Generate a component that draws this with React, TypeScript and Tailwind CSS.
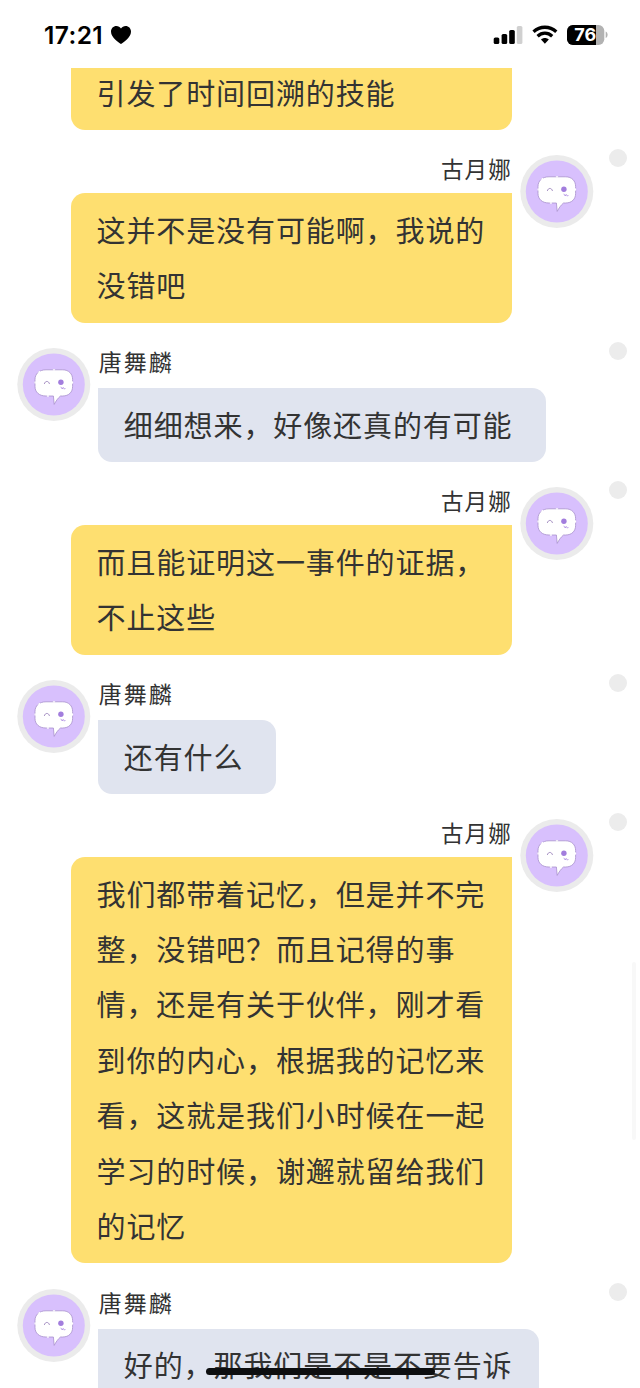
import React from "react";

type Message = {
  side: "left" | "right";
  name: string;
  lines: string[];
  bubble: string;
};

const messages: Message[] = [
  { side: "right", name: "古月娜", lines: ["这并不是没有可能啊，我说的", "没错吧"], bubble: "w-[441.5px] h-[129.5px]" },
  { side: "left", name: "唐舞麟", lines: ["细细想来，好像还真的有可能"], bubble: "w-[448.3px] h-[74px]" },
  { side: "right", name: "古月娜", lines: ["而且能证明这一事件的证据，", "不止这些"], bubble: "w-[441.5px] h-[129.5px]" },
  { side: "left", name: "唐舞麟", lines: ["还有什么"], bubble: "w-[178.3px] h-[74px]" },
  {
    side: "right",
    name: "古月娜",
    lines: [
      "我们都带着记忆，但是并不完",
      "整，没错吧？而且记得的事",
      "情，还是有关于伙伴，刚才看",
      "到你的内心，根据我的记忆来",
      "看，这就是我们小时候在一起",
      "学习的时候，谢邂就留给我们",
      "的记忆",
    ],
    bubble: "w-[441.5px] h-[406.4px]",
  },
  { side: "left", name: "唐舞麟", lines: ["好的，那我们是不是不要告诉"], bubble: "w-[441px] h-[129.5px]" },
];

function Avatar() {
  return (
    <svg viewBox="0 0 74 74" className="h-[74px] w-[74px] shrink-0">
      <circle cx="36.8" cy="36.5" r="36.5" fill="#ebebeb" />
      <circle cx="36.8" cy="36.5" r="31" fill="#d8c0fd" />
      <path
        d="M29 21.8H45.5C52 21.8 55.6 26 55.6 31.5V38.5C55.6 44 52 48 45.5 48H43.5C41 50 39 53 37.2 56.4L36.4 48H29C22 48 18 44 18 38.5V31.5C18 26 22 21.8 29 21.8Z"
        fill="#fff"
        stroke="#a48cc9"
        strokeWidth=".75"
      />
      <path
        d="M21.8 24.2L22.6 23.6M36.4 21.8H37.6M18.1 34V35M55.5 34V35M30.4 48H31.4"
        fill="none"
        stroke="#fff"
        strokeWidth="1.3"
        strokeLinecap="round"
      />
      <path d="M27.4 35.6C28 32.6 31.8 32.6 32.4 35.6" fill="none" stroke="#9277b5" strokeWidth=".8" strokeLinecap="round" />
      <circle cx="43.9" cy="34.2" r="2.7" fill="#a27ddd" />
      <path d="M43.8 38.8L45.2 41L46.2 39.4L47.4 41.2L48.4 40" fill="none" stroke="#a27ddd" strokeWidth=".7" />
    </svg>
  );
}

function MoreDot() {
  return <span className="absolute -top-[6px] right-[13px] h-[18px] w-[18px] rounded-full bg-[#ececec]" />;
}

function Lines({ lines }: { lines: string[] }) {
  return (
    <>
      {lines.map((line) => (
        <p key={line} className="whitespace-nowrap text-[29px] leading-[55.4px] tracking-[0.9px] text-[#333]">
          {line}
        </p>
      ))}
    </>
  );
}

function MessageRow({ message }: { message: Message }) {
  const { side, name, lines, bubble } = message;
  if (side === "right") {
    return (
      <div className="relative mb-[25.5px] flex justify-end gap-[7.5px] pr-[46.5px]">
        <div className="flex flex-col items-end">
          <p className="h-[38px] text-[22.5px] leading-[26px] tracking-[1.2px] text-[#333]">{name}</p>
          <div className={`rounded-[14px] rounded-tr-none bg-[#fedf70] pt-[8.6px] pl-[26px] ${bubble}`}>
            <Lines lines={lines} />
          </div>
        </div>
        <Avatar />
        <MoreDot />
      </div>
    );
  }
  return (
    <div className="relative mb-[25px] flex gap-[7.5px] pl-[16.5px]">
      <Avatar />
      <div>
        <p className="h-[40px] pl-[0.7px] text-[23px] leading-[26px] tracking-[2px] text-[#333]">{name}</p>
        <div className={`rounded-[14px] rounded-tl-none bg-[#e0e4ef] pt-[8.6px] pl-[25.8px] ${bubble}`}>
          <Lines lines={lines} />
        </div>
      </div>
      <MoreDot />
    </div>
  );
}

function StatusBar() {
  return (
    <header className="flex h-[68px] items-start justify-between pt-[24px] pl-[44px] pr-[32px] text-black">
      <div className="-mt-px flex items-center gap-[7.5px] font-['Inter',sans-serif]">
        <span className="text-[24.5px] leading-[24px] font-semibold tracking-[0.4px]">17:21</span>
        <svg viewBox="0 0 20 18" className="h-[18px] w-[20px]">
          <path
            d="M10 18C8.5 17 0 11.6 0 5.8C0 2.4 2.4 0 5.4 0C7.3 0 9 1 10 2.6C11 1 12.7 0 14.6 0C17.6 0 20 2.4 20 5.8C20 11.6 11.5 17 10 18Z"
            fill="#000"
          />
        </svg>
      </div>
      <svg viewBox="0 0 116 24" className="h-[24px] w-[116px]">
        <rect x="1.7" y="13.5" width="5.6" height="6.5" rx="1.6" />
        <rect x="9.6" y="10" width="5.6" height="10" rx="1.6" />
        <rect x="17.2" y="6" width="5.6" height="14" rx="1.6" />
        <rect x="24.8" y="2" width="5.6" height="18" rx="1.6" fill="#d0d0d0" />
        <g fill="none" stroke="#000" strokeWidth="3.3">
          <path d="M41.5 7.8C48.2 1.7 57.6 1.7 64.3 7.8" />
          <path d="M45.6 12.2C49.9 8.2 55.9 8.2 60.2 12.2" />
        </g>
        <path d="M49 15.6C51.3 13.6 54.5 13.6 56.8 15.6L52.9 19.8Z" />
        <clipPath id="battery">
          <rect x="75" y="1" width="37.3" height="20" rx="5.8" />
        </clipPath>
        <g clipPath="url(#battery)">
          <rect x="75" y="1" width="38" height="20" fill="#b2b2b2" />
          <rect x="75" y="1" width="29" height="20" />
        </g>
        <path d="M113.7 7.5C116.2 8.5 116.2 13.1 113.7 14.1Z" fill="#b2b2b2" />
        <text x="93.3" y="17.4" textAnchor="middle" fontFamily="Inter, sans-serif" fontSize="18" fontWeight="700" fill="#fff">
          76
        </text>
      </svg>
    </header>
  );
}

export default function App() {
  return (
    <div className="relative h-[1388px] w-[640px] overflow-hidden bg-white font-['Noto_Sans_CJK_SC',sans-serif]">
      <StatusBar />
      <main>
        <div className="mb-[25px] ml-[70.5px] h-[62px] w-[441.5px] rounded-b-[14px] bg-[#fedf70] px-[26px]">
          <div className="-translate-y-[3px]">
            <Lines lines={["引发了时间回溯的技能"]} />
          </div>
        </div>
        {messages.map((message, index) => (
          <MessageRow key={index} message={message} />
        ))}
      </main>
      <span className="absolute top-[962px] right-[4px] h-[178px] w-[4px] rounded-full bg-[#f8f8f8]" />
      <span className="absolute top-[1367.5px] left-[206px] h-[7.5px] w-[229px] rounded-full bg-[#0d0e10]" />
    </div>
  );
}
